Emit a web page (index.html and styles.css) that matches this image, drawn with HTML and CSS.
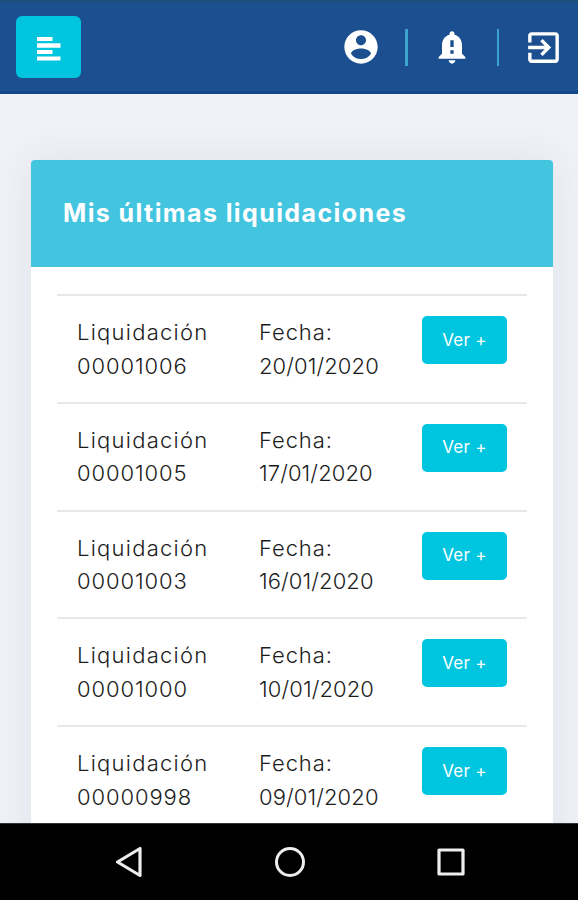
FILE: index.html
```html
<!DOCTYPE html>
<html lang="es">
<head>
  <meta charset="UTF-8">
  <title>Mis últimas liquidaciones</title>
  <link rel="stylesheet" href="styles.css">
</head>
<body>
  <header class="topbar">
    <button class="menu-btn" aria-label="Menú">
      <svg width="24" height="26" viewBox="0 0 24 26" fill="#fff">
        <path d="M0 1h15.500v4H0zM0 7.200h23.500v4.600H0zM0 14h15.500v4H0zM0 20.400h23.500v4.200H0z"/>
      </svg>
    </button>
    <nav class="actions">
      <a class="action">
        <svg width="40" height="40" viewBox="0 0 24 24" fill="#fff">
          <path d="M12 2C6.480 2 2 6.480 2 12s4.480 10 10 10 10-4.480 10-10S17.520 2 12 2zm0 3c1.660 0 3 1.340 3 3s-1.340 3-3 3-3-1.340-3-3 1.340-3 3-3zm0 14.200c-2.500 0-4.710-1.280-6-3.220.030-1.990 4-3.080 6-3.080 1.990 0 5.970 1.090 6 3.080-1.290 1.940-3.500 3.220-6 3.220z"/>
        </svg>
      </a>
      <span class="divider"></span>
      <a class="action">
        <svg width="40" height="40" viewBox="0 0 24 24" fill="#fff">
          <path d="M12 22c1.100 0 2-.9 2-2h-4c0 1.100.9 2 2 2zm6-6v-5c0-3.070-1.630-5.640-4.500-6.320V4c0-.830-.670-1.500-1.500-1.500s-1.500.67-1.500 1.500v.68C7.640 5.360 6 7.920 6 11v5l-2 2v1h16v-1l-2-2zm-5 0h-2v-2h2v2zm0-4h-2V8h2v4z"/>
        </svg>
      </a>
      <span class="divider"></span>
      <a class="action">
        <svg width="41" height="41" viewBox="0 0 24 24" fill="#fff">
          <path d="M10.090 15.590L11.500 17l5-5-5-5-1.410 1.410L12.670 11H3v2h9.670l-2.580 2.590zM19 3H5c-1.110 0-2 .9-2 2v4h2V5h14v14H5v-4H3v4c0 1.100.89 2 2 2h14c1.100 0 2-.9 2-2V5c0-1.100-.9-2-2-2z"/>
        </svg>
      </a>
    </nav>
  </header>

  <main class="content">
    <section class="card">
      <h2 class="card-header">Mis últimas liquidaciones</h2>
      <div class="list">
        <div class="row">
          <div class="cell"><span class="name">Liquidación</span><span class="number">00001006</span></div>
          <div class="cell"><span class="label">Fecha:</span><span class="date">20/01/2020</span></div>
          <button class="btn">Ver +</button>
        </div>
        <div class="row">
          <div class="cell"><span class="name">Liquidación</span><span class="number">00001005</span></div>
          <div class="cell"><span class="label">Fecha:</span><span class="date">17/01/2020</span></div>
          <button class="btn">Ver +</button>
        </div>
        <div class="row">
          <div class="cell"><span class="name">Liquidación</span><span class="number">00001003</span></div>
          <div class="cell"><span class="label">Fecha:</span><span class="date">16/01/2020</span></div>
          <button class="btn">Ver +</button>
        </div>
        <div class="row">
          <div class="cell"><span class="name">Liquidación</span><span class="number">00001000</span></div>
          <div class="cell"><span class="label">Fecha:</span><span class="date">10/01/2020</span></div>
          <button class="btn">Ver +</button>
        </div>
        <div class="row">
          <div class="cell"><span class="name">Liquidación</span><span class="number">00000998</span></div>
          <div class="cell"><span class="label">Fecha:</span><span class="date">09/01/2020</span></div>
          <button class="btn">Ver +</button>
        </div>
      </div>
    </section>
  </main>

  <footer class="navbar">
    <svg width="28" height="34" viewBox="0 0 28 34" fill="none" stroke="#eee" stroke-width="3.200" stroke-linejoin="round">
      <path d="M2.500 17L25 3.500v27z"/>
    </svg>
    <svg width="32" height="32" viewBox="0 0 32 32" fill="none" stroke="#eee" stroke-width="3">
      <circle cx="16" cy="16" r="13.500"/>
    </svg>
    <svg width="28" height="28" viewBox="0 0 28 28" fill="none" stroke="#eee" stroke-width="3.200" stroke-linejoin="round">
      <path d="M2 2h24v24H2z"/>
    </svg>
  </footer>
</body>
</html>
```

FILE: styles.css
```css
* { box-sizing: border-box; }

body {
  margin: 0;
  height: 900px;
  display: flex;
  flex-direction: column;
  overflow: hidden;
  background: #f0f2f7;
  font-family: Inter, "Open Sans", sans-serif;
  color: #1c1c1c;
}

button { border: 0; padding: 0; font-family: inherit; color: #fff; background: #00c5df; }
svg { display: block; }

.topbar {
  flex: none;
  height: 94px;
  padding: 0 14px 0 16px;
  display: flex;
  align-items: center;
  justify-content: space-between;
  background: #1b4f8f;
  border-top: 3px solid #1c4e7e;
  border-bottom: 3px solid #10488a;
}

.menu-btn {
  width: 65px;
  height: 62px;
  border-radius: 6px;
  display: flex;
  align-items: center;
  justify-content: center;
  padding-top: 3px;
}

.actions { display: flex; align-items: center; }
.action { width: 41px; display: flex; justify-content: center; }
.divider { width: 2.500px; height: 37px; margin: 0 24px; background: #3da3cf; }

.content {
  flex: 1;
  min-height: 0;
  overflow: hidden;
  padding: 66px 25px 0 31px;
}

.card {
  height: 720px;
  border-radius: 5px;
  background: #fff;
  box-shadow: 0 0 40px rgba(60, 60, 90, 0.09);
}

.card-header {
  margin: 0;
  height: 107px;
  padding: 0 32px;
  line-height: 107px;
  border-radius: 4px 4px 0 0;
  background: #43c4df;
  color: #fff;
  font-size: 25px;
  font-weight: 700;
  letter-spacing: 1.400px;
}

.list { padding: 27px 26px 0; }

.row {
  height: 107.750px;
  padding: 20px 20px 0;
  display: grid;
  grid-template-columns: 182px 163px 85px;
  align-items: start;
  border-top: 2px solid #e6e8ea;
}

.cell {
  display: flex;
  flex-direction: column;
  align-items: flex-start;
  font-size: 22px;
  font-weight: 300;
  line-height: 33.600px;
}

.name { letter-spacing: 1.250px; }
.number { letter-spacing: 0.900px; }
.label { letter-spacing: 0.900px; }
.date { letter-spacing: 0.100px; }

.btn {
  height: 48px;
  padding-bottom: 1px;
  border-radius: 5px;
  font-size: 17px;
  letter-spacing: 0.300px;
}

.navbar {
  flex: none;
  height: 77px;
  padding: 0 113px 0 115px;
  display: flex;
  align-items: center;
  justify-content: space-between;
  background: #000;
  border-top: 1px solid #333;
}
```
